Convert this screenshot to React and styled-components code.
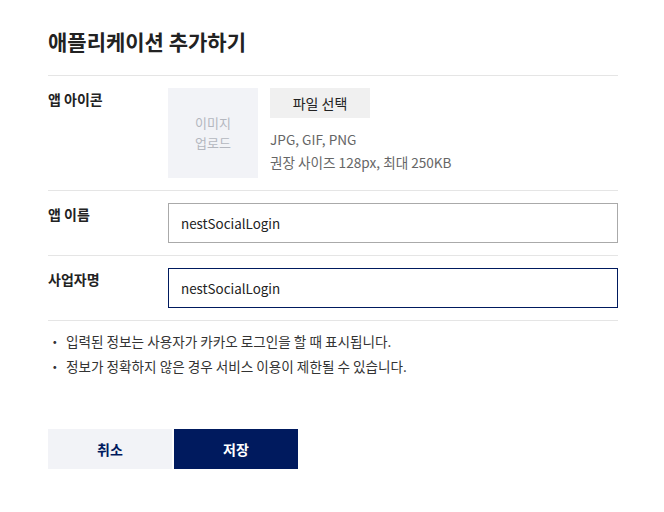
import React from "react";
import styled, { createGlobalStyle } from "styled-components";

const GlobalStyle = createGlobalStyle`
  * { box-sizing: border-box; }
  body {
    margin: 0;
    background: #fff;
    font-family: "Noto Sans CJK KR", "Noto Sans", sans-serif;
    color: #222;
  }
`;

const App = () => {
  return (
    <Page>
      <GlobalStyle />
      <Title>애플리케이션 추가하기</Title>
      <Form>
        <Row>
          <Label>앱 아이콘</Label>
          <IconField>
            <UploadBox>
              이미지
              <br />
              업로드
            </UploadBox>
            <FileInfo>
              <FileButton type="button">파일 선택</FileButton>
              <Hint>
                JPG, GIF, PNG
                <br />
                권장 사이즈 128px, 최대 250KB
              </Hint>
            </FileInfo>
          </IconField>
        </Row>
        <Row>
          <Label>앱 이름</Label>
          <Input defaultValue="nestSocialLogin" />
        </Row>
        <Row>
          <Label>사업자명</Label>
          <Input focused defaultValue="nestSocialLogin" />
        </Row>
      </Form>
      <Notes>
        <li>입력된 정보는 사용자가 카카오 로그인을 할 때 표시됩니다.</li>
        <li>정보가 정확하지 않은 경우 서비스 이용이 제한될 수 있습니다.</li>
      </Notes>
      <Actions>
        <ActionButton type="button">취소</ActionButton>
        <ActionButton type="button" primary>
          저장
        </ActionButton>
      </Actions>
    </Page>
  );
};

const Page = styled.div`
  width: 664px;
  padding: 27px 46px 0 48px;
`;

const Title = styled.h1`
  margin: 0 0 19px;
  font-size: 21px;
  line-height: 29px;
  font-weight: 700;
  color: #222;
`;

const Form = styled.div`
  border-top: 1px solid #e5e5e5;
`;

const Row = styled.div`
  display: flex;
  padding: 12px 0;
  border-bottom: 1px solid #e5e5e5;
`;

const Label = styled.div`
  width: 120px;
  flex-shrink: 0;
  font-size: 14px;
  font-weight: 700;
  line-height: 22px;
  color: #222;
`;

const IconField = styled.div`
  display: flex;
  gap: 12px;
`;

const UploadBox = styled.div`
  width: 90px;
  height: 90px;
  background: #f2f3f7;
  display: flex;
  align-items: center;
  justify-content: center;
  text-align: center;
  font-size: 13px;
  line-height: 20px;
  color: #b4b7bf;
`;

const FileInfo = styled.div`
  display: flex;
  flex-direction: column;
  align-items: flex-start;
`;

const FileButton = styled.button`
  width: 100px;
  height: 30px;
  border: 0;
  background: #f0f0f0;
  font-family: inherit;
  font-size: 14px;
  font-weight: 400;
  color: #222;
  padding: 0;
`;

const Hint = styled.p`
  margin: 10px 0 0;
  font-size: 13.6px;
  line-height: 23px;
  color: #666;
`;

const Input = styled.input`
  flex: 1;
  height: 40px;
  padding: 0 12px;
  border: 1px solid ${(p) => (p.focused ? "#001a5e" : "#aaa")};
  font-family: inherit;
  font-size: 13.4px;
  color: #222;
  outline: none;
`;

const Notes = styled.ul`
  margin: 0;
  padding: 8px 0 0;
  list-style: none;

  li {
    position: relative;
    padding-left: 18px;
    font-size: 13.6px;
    line-height: 25px;
    color: #333;
  }

  li:before {
    content: "・";
    position: absolute;
    left: 0;
    top: 0;
  }
`;

const Actions = styled.div`
  display: flex;
  gap: 2px;
  margin-top: 50px;
`;

const ActionButton = styled.button`
  width: 124px;
  height: 40px;
  border: 0;
  background: ${(p) => (p.primary ? "#001a5e" : "#f2f3f7")};
  color: ${(p) => (p.primary ? "#fff" : "#001a5e")};
  font-family: inherit;
  font-size: 14px;
  font-weight: 700;
`;

export default App;
